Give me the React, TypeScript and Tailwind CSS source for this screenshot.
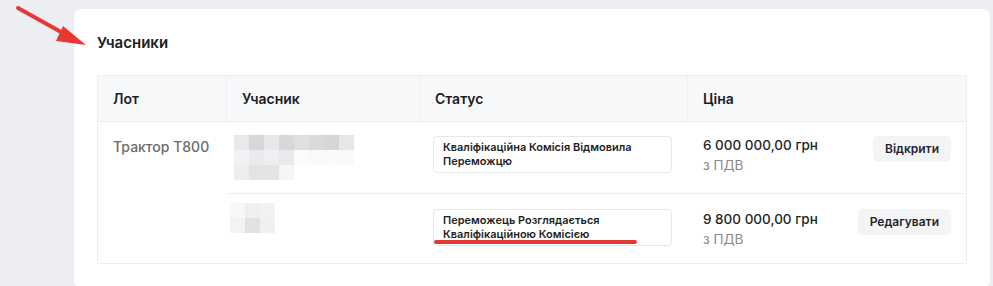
import React from "react";

const font = { fontFamily: "Inter, 'Noto Sans', sans-serif" };

// pixelated (blurred) participant names
const blurBig = [
  ["#e8e9eb", "#d5d7da", "#e7e8ea", "#d6d8db", "#dfe0e2", "#d9dadd", "#d4d7d9", "#e6e7e9"],
  ["#f1f2f3", "#e9eaec", "#eeeff0", "#e8e9eb", "#fbfbfb", "#f9f9f9", "#fafafa", "#f8f9f9"],
  ["#eeeeef", "#e2e3e5", "#e2e3e4", "#f6f6f6"],
];
const blurSmall = [
  ["#f8f8f8", "#eeeff1", "#f1f2f4"],
  ["#f3f3f4", "#e1e2e4", "#eff0f2"],
];

function Pixels({ rows }: { rows: string[][] }) {
  return (
    <div className="flex flex-col">
      {rows.map((row, i) => (
        <div key={i} className="flex">
          {row.map((c, j) => (
            <div key={j} className="h-[15px] w-[15px]" style={{ backgroundColor: c }} />
          ))}
        </div>
      ))}
    </div>
  );
}

function Button({ label }: { label: string }) {
  return (
    <button className="h-[26px] rounded-[5px] bg-[#f3f4f6] px-3 text-[12px] font-semibold leading-[26px] text-[#1f2328]">
      {label}
    </button>
  );
}

export default function App() {
  const headers = ["Лот", "Учасник", "Статус", "Ціна"];
  return (
    <div className="relative h-[286px] overflow-hidden bg-[#edeef2] pt-[9px] pl-[74px] pr-[3px]" style={font}>
      <div className="rounded-lg bg-white px-[23px] pt-[24px] pb-[24px]">
        <h2 className="text-[15px] font-semibold leading-5 text-[#1d1d1f]">Учасники</h2>
        <div className="mt-[22px] grid grid-cols-[128px_193px_268px_279px] border border-[#eceef1] text-sm">
          {headers.map((h, i) => (
            <div
              key={h}
              className={`flex h-[45px] items-center bg-[#f7f8fa] pl-[15px] font-semibold text-[#1d1d1f] ${i > 0 ? "border-l border-[#eef0f3]" : ""}`}
            >
              {h}
            </div>
          ))}

          {/* row 1 */}
          <div className="row-span-2 border-t border-[#eceef1] pt-[15px] pl-[15px] leading-5 font-medium text-[#6b6b6b]">
            Трактор T800
          </div>
          <div className="h-[72px] border-t border-[#eceef1] pt-[13px] pl-[8px]">
            <Pixels rows={blurBig} />
          </div>
          <div className="h-[72px] border-t border-[#eceef1] pt-[14px] pl-[14px]">
            <div className="w-[239px] rounded-[4px] border border-[#e7e8eb] px-[9px] pt-[3px] pb-[4px] text-[11px] font-semibold leading-[14px] text-[#1f1f1f]">
              Кваліфікаційна Комісія Відмовила Переможцю
            </div>
          </div>
          <div className="flex h-[72px] justify-between border-t border-[#eceef1] pt-[13px] pr-[15px] pl-4">
            <div className="text-[13.5px] leading-5">
              <div className="font-medium text-[#1f1f1f]">6 000 000,00 грн</div>
              <div className="text-[#8a8a8a]">з ПДВ</div>
            </div>
            <div className="pt-px">
              <Button label="Відкрити" />
            </div>
          </div>

          {/* row 2 */}
          <div className="h-[70px] border-t border-[#eceef1] pt-[9px] pl-[4px]">
            <Pixels rows={blurSmall} />
          </div>
          <div className="relative h-[70px] border-t border-[#eceef1] pt-[15px] pl-[14px]">
            <div className="w-[239px] rounded-[4px] border border-[#e7e8eb] px-[9px] pt-[3px] pb-[4px] text-[11px] font-semibold leading-[14px] text-[#1f1f1f]">
              Переможець Розглядається Кваліфікаційною Комісією
            </div>
            <div className="absolute top-[46px] left-[15px] h-[4px] w-[203px] rounded-full bg-[#e53935]" />
          </div>
          <div className="flex h-[70px] justify-between border-t border-[#eceef1] pt-[15px] pr-[15px] pl-4">
            <div className="text-[13.5px] leading-5">
              <div className="font-medium text-[#1f1f1f]">9 800 000,00 грн</div>
              <div className="text-[#8a8a8a]">з ПДВ</div>
            </div>
            <div>
              <Button label="Редагувати" />
            </div>
          </div>
        </div>
      </div>

      {/* annotation arrow */}
      <svg className="absolute top-0 left-0" width="100" height="60" viewBox="0 0 100 60">
        <line x1="18" y1="8" x2="70" y2="37" stroke="#e53935" strokeWidth="4" strokeLinecap="round" />
        <polygon points="86,45 63,26 56,41" fill="#e53935" />
      </svg>
    </div>
  );
}
